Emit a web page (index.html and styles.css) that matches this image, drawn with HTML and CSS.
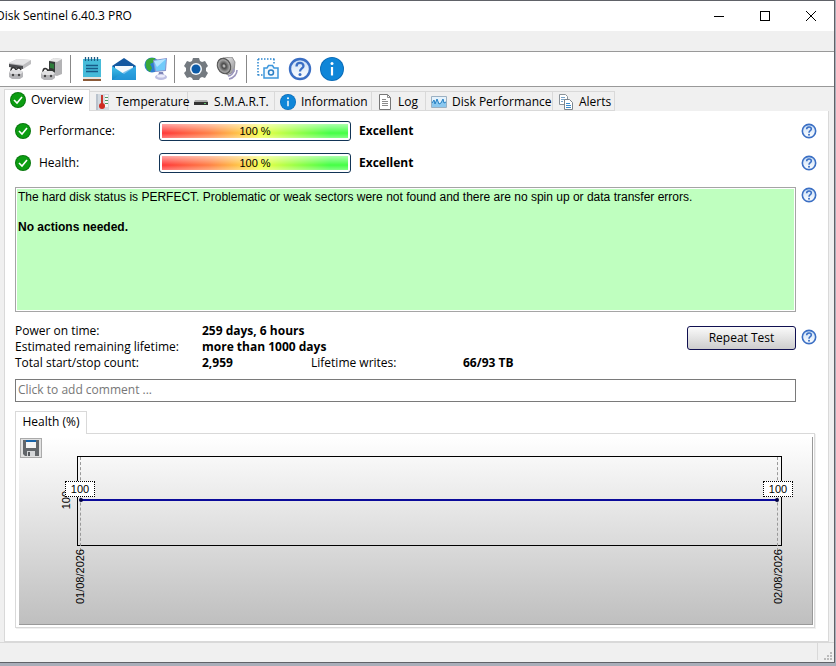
FILE: index.html
```
<!DOCTYPE html>
<html lang="en">
<head>
    <meta charset="utf-8">
    <title>Disk Sentinel</title>
    <link rel="stylesheet" href="styles.css">
</head>
<body>
    <svg class="defs" width="0" height="0">
        <defs>
            <linearGradient id="sky" x1="0" y1="0" x2="0" y2="1"><stop offset="0" stop-color="#45c3ee"/><stop offset="1" stop-color="#1387c6"/></linearGradient>
            <linearGradient id="steel" x1="0" y1="0" x2="1" y2="1"><stop offset="0" stop-color="#f2f2f2"/><stop offset="1" stop-color="#8d8d90"/></linearGradient>
            <linearGradient id="help-bg" x1="0" y1="0" x2="0" y2="1"><stop offset="0" stop-color="#c9dff6"/><stop offset="1" stop-color="#ffffff"/></linearGradient>
            <radialGradient id="cone"><stop offset="0" stop-color="#e5e5e5"/><stop offset="0.3" stop-color="#4a4a4a"/><stop offset="0.8" stop-color="#a5a5a5"/><stop offset="1" stop-color="#666"/></radialGradient>
        </defs>
        <symbol id="check" viewBox="0 0 16 16">
            <circle cx="8" cy="8" r="8" fill="#08780d"/><circle cx="8" cy="8" r="7" fill="#0c9d12"/>
            <path d="M4 8l3 3 5-6" fill="none" stroke="#fff" stroke-width="1.6"/>
        </symbol>
        <symbol id="help" viewBox="0 0 24 24">
            <circle cx="12" cy="12" r="10" fill="url(#help-bg)" stroke="#3b6fc4" stroke-width="2.4"/>
            <path d="M8.5 9.5c0-5 7-4.500 7-.5 0 2.500-3.500 2.500-3.500 5.500" fill="none" stroke="#3b6fc4" stroke-width="2.300"/>
            <circle cx="12" cy="17.500" r="1.500" fill="#3b6fc4"/>
        </symbol>
        <symbol id="info" viewBox="0 0 24 24">
            <circle cx="12" cy="12" r="12" fill="#0b6cb8"/><circle cx="12" cy="12" r="11" fill="#0f86d8"/>
            <circle cx="12" cy="6.500" r="1.500" fill="#fff"/><path d="M12 10v8.500" stroke="#fff" stroke-width="2.200"/>
        </symbol>
    </svg>

    <div class="window">
        <header class="title-bar">
            <span class="title">Disk Sentinel 6.40.3 PRO</span>
            <div class="window-buttons">
                <button type="button" aria-label="Minimize"><svg width="10" height="10"><path d="M0 5.500h10" stroke="#000"/></svg></button>
                <button type="button" aria-label="Maximize"><svg width="10" height="10"><rect x="0.500" y="0.500" width="9" height="9" fill="none" stroke="#000"/></svg></button>
                <button type="button" aria-label="Close"><svg width="10" height="10"><path d="M0 0l10 10M10 0L0 10" stroke="#000"/></svg></button>
            </div>
        </header>
        <div class="menu-bar"></div>

        <div class="toolbar">
            <button type="button" aria-label="Disk test">
                <svg width="24" height="24" viewBox="0 0 24 24">
                    <path d="M1 6l8-4 14 1v4l-8 5-14-2z" fill="#bdbdbf"/><path d="M1 6l8-4 14 1-8 5z" fill="#e5e5e6"/><path d="M1 7l14 2v3L1 10z" fill="#4c4d50"/>
                    <path d="M3 14c0-5 4-4 5-1M8 14c1-4 4-4 5-1" fill="none" stroke="#333" stroke-width="1.500"/>
                    <path d="M1 15l3-2h8l3 2v5l-3 2H4l-3-2z" fill="#b5b5b8"/><path d="M1 15l3-2h8l3 2-2 2H3z" fill="#dedee0"/>
                    <circle cx="5" cy="18" r="1.200" fill="#444"/><circle cx="11" cy="18" r="1.200" fill="#444"/>
                </svg>
            </button>
            <button type="button" aria-label="Surface test">
                <svg width="24" height="24" viewBox="0 0 24 24">
                    <path d="M9 4l5-3 8 1v15l-5 2-8-2z" fill="#b3b3b5"/><path d="M9 4l5-3 8 1-5 3z" fill="#e8e8e8"/><path d="M9 4l6 1v12l-6-1z" fill="#353b38"/><path d="M10 6l4 1v5l-4-1z" fill="#2d7c3a"/>
                    <path d="M3 15c0-5 4-4 5-1M8 15c1-4 4-4 5-1" fill="none" stroke="#333" stroke-width="1.500"/>
                    <path d="M1 16l3-2h8l3 2v5l-3 2H4l-3-2z" fill="#b5b5b8"/><path d="M1 16l3-2h8l3 2-2 2H3z" fill="#e1e1e2"/>
                    <circle cx="5" cy="19" r="1.200" fill="#444"/><circle cx="11" cy="19" r="1.200" fill="#444"/>
                </svg>
            </button>
            <span class="separator"></span>
            <button type="button" aria-label="Report">
                <svg width="24" height="24" viewBox="0 0 24 24">
                    <rect x="3" y="2" width="18" height="20" fill="#46bbd9"/><path d="M3 21h18v3H3z" fill="#8a5a38"/><path d="M3 20h18v2H3z" fill="#e8e4de"/>
                    <path d="M5.500 0v4M8.500 0v4M11.500 0v4M14.500 0v4M17.500 0v4" stroke="#1c5d86" stroke-width="1.300"/>
                    <path d="M6 8.500h12M6 11.500h12M6 14.500h12" stroke="#175a88" stroke-width="1.300"/>
                </svg>
            </button>
            <button type="button" aria-label="Send mail">
                <svg width="24" height="24" viewBox="0 0 24 24">
                    <path d="M0 9l12-8 12 8v4H0z" fill="#1558a0"/><path d="M3 9h18v6l-9 3-9-3z" fill="#f5f9fc"/>
                    <path d="M0 9l12 8 12-8v14H0z" fill="url(#sky)"/><path d="M0 23l12-8 12-6v14z" fill="#2a9be0" opacity=".6"/>
                </svg>
            </button>
            <button type="button" aria-label="Network status">
                <svg width="24" height="24" viewBox="0 0 24 24">
                    <circle cx="8" cy="8" r="7.500" fill="#2d7fd0"/><path d="M2 4c3-4 6-3 9-3l-1 4-4 2 2 4-2 4c-4-2-5-7-4-11z" fill="#3aa83a"/>
                    <path d="M9 3l14-2-1 13-11 1z" fill="#8a93cc"/><path d="M10 4l12-2-1 11-9 1z" fill="#71cbfa"/><path d="M10 4l12-2-9 8z" fill="#b4e6ff"/>
                    <path d="M15 15h4l1 4h-6z" fill="#8187b8"/><ellipse cx="17" cy="20" rx="6" ry="3" fill="#bdbfe2"/><ellipse cx="17" cy="19" rx="4" ry="1.500" fill="#ebebfa"/>
                </svg>
            </button>
            <span class="separator"></span>
            <button type="button" aria-label="Configuration">
                <svg width="24" height="24" viewBox="0 0 24 24">
                    <path d="M9 1h6l1 3 2 1 3-1 3 5-2 2v3l2 2-3 5-3-1-2 1-1 2H9l-1-2-2-1-3 1-3-5 2-2v-3L0 9l3-5 3 1 2-1z" fill="#747a80"/>
                    <circle cx="12" cy="12" r="6" fill="#f4f8fb"/><circle cx="12" cy="12" r="4.500" fill="#0c5ba8"/>
                </svg>
            </button>
            <button type="button" aria-label="Sound">
                <svg width="24" height="24" viewBox="0 0 24 24">
                    <path d="M7 1l9-1 3 5-1 10-7 3z" fill="url(#steel)" stroke="#777" stroke-width=".7"/>
                    <ellipse cx="8" cy="9" rx="6.500" ry="8" transform="rotate(-25 8 9)" fill="url(#cone)" stroke="#555"/>
                    <path d="M12 19c3 0 6-3 6-7M13 22c5-1 8-5 8-9" fill="none" stroke="#9b96bd" stroke-width="1.600"/>
                </svg>
            </button>
            <span class="separator"></span>
            <button type="button" aria-label="Screenshot">
                <svg width="24" height="24" viewBox="0 0 24 24">
                    <path d="M2 2h18M2 2v18M18 2v5M2 18h5" fill="none" stroke="#2c87cf" stroke-width="1.500" stroke-dasharray="1.500 1.500"/>
                    <path d="M8 11h3l1.500-2.500h4L18 11h4v10H8z" fill="#f2f9ff" stroke="#3c96dc" stroke-width="1.500"/>
                    <circle cx="15" cy="15.500" r="2.500" fill="none" stroke="#2c7fc4" stroke-width="1.500"/>
                </svg>
            </button>
            <button type="button" aria-label="Help"><svg width="24" height="24"><use href="#help"/></svg></button>
            <button type="button" aria-label="About"><svg width="24" height="24"><use href="#info"/></svg></button>
        </div>

        <div class="tabs" role="tablist">
            <button type="button" role="tab" aria-selected="true" class="tab active"><svg width="16" height="16"><use href="#check"/></svg>Overview</button>
            <button type="button" role="tab" class="tab">
                <svg width="16" height="16" viewBox="0 0 16 16"><path d="M1 0h13v16H1z" fill="#d3dae1"/><path d="M2 0v16" stroke="#9fabb8"/><path d="M10 1h3v12h-3z" fill="#f6f6f6"/><path d="M6 1h2v9H6z" fill="#c9372c"/><circle cx="7" cy="12" r="3" fill="#cf2b20"/><path d="M10 3.500h3M10 6.500h3M10 9.500h3" stroke="#4c9b62"/></svg>Temperature</button>
            <button type="button" role="tab" class="tab">
                <svg width="16" height="16" viewBox="0 0 16 16"><path d="M2 6h12l1 2H1z" fill="#aaa"/><path d="M1 8h14v3H1z" fill="#333"/><path d="M11 9h2v1h-2z" fill="#62c76c"/></svg>S.M.A.R.T.</button>
            <button type="button" role="tab" class="tab"><svg width="16" height="16"><use href="#info"/></svg>Information</button>
            <button type="button" role="tab" class="tab">
                <svg width="16" height="16" viewBox="0 0 16 16"><path d="M2.500.5h8l3 3v12h-11z" fill="#fff" stroke="#777"/><path d="M10.500.5v3h3M5 5.500h4M5 7.500h6M5 9.500h6M5 11.500h6" fill="none" stroke="#8b8b8b"/></svg>Log</button>
            <button type="button" role="tab" class="tab">
                <svg width="16" height="16" viewBox="0 0 16 16"><path d="M.5 2.500h15v11H.5z" fill="#e4f2fc" stroke="#9bb0c2"/><path d="M1 13V9l2-3 1 4 2-5 2 5 2-1 2-4 1 4 2-1v5z" fill="#8bc8ef"/><path d="M1 9l2-3 1 4 2-5 2 5 2-1 2-4 1 4 2-1" fill="none" stroke="#2480c4"/></svg>Disk Performance</button>
            <button type="button" role="tab" class="tab">
                <svg width="16" height="16" viewBox="0 0 16 16"><path d="M1.500.5h6l2 2v8h-8z" fill="#fff" stroke="#8b9298"/><path d="M3 3.500h4M3 5.500h4M3 7.500h2" stroke="#7aa5ca"/><path d="M6.500 5.500h5l3 3v7h-8z" fill="#fff" stroke="#7c858d"/><path d="M8 9.500h4M8 11.500h5M8 13.500h5" stroke="#3b8bcb"/></svg>Alerts</button>
        </div>

        <main class="panel">
            <div class="line">
                <div class="meter-row">
                    <svg width="16" height="16"><use href="#check"/></svg>
                    <span class="meter-label">Performance:</span>
                    <div class="meter"><div class="meter-fill">100 %</div></div>
                    <b>Excellent</b>
                </div>
                <button type="button" class="help" aria-label="Help"><svg width="16" height="16"><use href="#help"/></svg></button>
            </div>
            <div class="line">
                <div class="meter-row">
                    <svg width="16" height="16"><use href="#check"/></svg>
                    <span class="meter-label">Health:</span>
                    <div class="meter"><div class="meter-fill">100 %</div></div>
                    <b>Excellent</b>
                </div>
                <button type="button" class="help" aria-label="Help"><svg width="16" height="16"><use href="#help"/></svg></button>
            </div>
            <div class="line status-line">
                <div class="status">
                    <p>The hard disk status is PERFECT. Problematic or weak sectors were not found and there are no spin up or data transfer errors.</p>
                    <p><b>No actions needed.</b></p>
                </div>
                <button type="button" class="help" aria-label="Help"><svg width="16" height="16"><use href="#help"/></svg></button>
            </div>
            <div class="line stats-line">
                <div class="stats-row">
                    <dl class="stats">
                        <dt>Power on time:</dt><dd class="wide">259 days, 6 hours</dd>
                        <dt>Estimated remaining lifetime:</dt><dd class="wide">more than 1000 days</dd>
                        <dt>Total start/stop count:</dt><dd>2,959</dd>
                        <dt>Lifetime writes:</dt><dd>66/93 TB</dd>
                    </dl>
                    <button type="button" class="repeat">Repeat Test</button>
                </div>
                <button type="button" class="help" aria-label="Help"><svg width="16" height="16"><use href="#help"/></svg></button>
            </div>
            <input type="text" class="comment" placeholder="Click to add comment ..." aria-label="Comment">

            <button type="button" class="chart-tab">Health (%)</button>
            <section class="chart-frame">
                <div class="chart">
                    <button type="button" class="save" aria-label="Save chart">
                        <svg width="16" height="16" viewBox="0 0 16 16"><path d="M0 0h16v16H2l-2-2z" fill="#62666a"/><path d="M3 0h10v8H3z" fill="#f4f4f4"/><path d="M3 0h10v2H3z" fill="#1763a8"/><path d="M4 11h8v5H4z" fill="#d4d6d8"/><path d="M5 12h2v4H5z" fill="#55585c"/></svg>
                    </button>
                    <div class="plot">
                        <span class="y-label">100</span>
                        <span class="guide start"></span>
                        <span class="guide end"></span>
                        <span class="series"></span>
                        <span class="point start">100</span>
                        <span class="point end">100</span>
                        <span class="date start">01/08/2026</span>
                        <span class="date end">02/08/2026</span>
                    </div>
                </div>
            </section>
        </main>

        <footer class="status-bar">
            <svg width="8" height="8" viewBox="0 0 8 8"><path d="M6 0h2v2H6zM3 3h2v2H3zM6 3h2v2H6zM0 6h2v2H0zM3 6h2v2H3zM6 6h2v2H6z" fill="#bbb"/></svg>
        </footer>
    </div>
</body>
</html>
```
FILE: styles.css
```
* {
    box-sizing: border-box;
}

body {
    margin: 0;
    background: #a9aeb9;
    color: #000;
    font-family: "Open Sans", "Noto Sans", sans-serif;
    font-size: 12px;
    line-height: 16px;
    overflow-x: hidden;
}

button,
input {
    margin: 0;
    padding: 0;
    border: none;
    background: none;
    color: inherit;
    font: inherit;
}

svg {
    display: block;
    flex-shrink: 0;
}

p,
dl,
dd {
    margin: 0;
}

.defs {
    position: absolute;
}

.window {
    display: flex;
    flex-direction: column;
    min-height: calc(100vh - 3px);
    margin-right: 1px;
    border: 1px solid #606268;
    border-left: none;
    background: #f0f0f0;
}

.title-bar {
    display: flex;
    justify-content: space-between;
    align-items: center;
    height: 30px;
    background: #fff;
}

.title {
    margin-left: -4px;
}

.window-buttons {
    display: flex;
}

.window-buttons button {
    display: flex;
    justify-content: center;
    align-items: center;
    width: 46px;
    height: 30px;
}

.menu-bar {
    height: 21px;
    border-bottom: 1px solid #999;
}

.toolbar {
    display: flex;
    align-items: center;
    gap: 8px;
    height: 35px;
    padding-left: 8px;
    background: #fff;
    border-bottom: 1px solid #999;
}

.separator {
    width: 1px;
    height: 28px;
    background: #888;
    margin-left: -2px;
    margin-right: 1px;
}

.tabs {
    display: grid;
    grid-template-columns: 86px 98px 87px 97px 54px 127px 62px;
    align-items: end;
    height: 24px;
    padding-left: 4px;
}

.tab {
    display: flex;
    align-items: center;
    gap: 5px;
    height: 20px;
    padding-left: 5px;
    border: 1px solid #d9d9d9;
    border-left: none;
    border-bottom: none;
    box-shadow: inset 0 -1px 0 #d9d9d9;
    white-space: nowrap;
}

.tab.active {
    height: 22px;
    padding-bottom: 2px;
    background: #fff;
    border-left: 1px solid #d9d9d9;
    box-shadow: none;
}

.panel {
    flex: 1;
    display: flex;
    flex-direction: column;
    align-items: stretch;
    margin: 0 5px 0 4px;
    padding: 4px 11px 13px 10px;
    background: #fff;
    border: 1px solid #d9d9d9;
    border-top: none;
}

.line {
    display: grid;
    grid-template-columns: 1fr 16px;
    gap: 5px;
    align-items: center;
    min-height: 32px;
}

.meter-row {
    display: flex;
    align-items: center;
    gap: 8px;
}

.meter-label {
    width: 112px;
}

.meter {
    width: 192px;
    height: 20px;
    padding: 2px;
    border: 1px solid #123456;
    border-radius: 3px;
    background: #fff;
}

.meter-fill {
    height: 14px;
    background: linear-gradient(rgba(255, 255, 255, 0.6), rgba(255, 255, 255, 0.1) 65%, rgba(255, 255, 255, 0.4)), linear-gradient(to right, #ff2020, #ff7030 25%, #ffc030 42%, #f0ff30 53%, #30ff30 90%);
    font: 11px/14px "Liberation Sans", Arial, sans-serif;
    text-align: center;
}

.status-line,
.stats-line {
    align-items: start;
}

.status-line {
    margin-top: 8px;
}

.status {
    min-height: 125px;
    padding: 2px;
    border: 1px solid #a5a5a5;
    box-shadow: inset 0 0 0 1px #fff;
    background: #bfffbf;
    font: 12px/15px "Liberation Sans", Arial, sans-serif;
}

.status p + p {
    margin-top: 15px;
}

.stats-line {
    margin-top: 11px;
}

.stats-line .help {
    margin-top: 6px;
}

.stats-row {
    display: flex;
    justify-content: space-between;
    align-items: start;
}

.stats {
    display: grid;
    grid-template-columns: 187px 109px 152px auto;
}

.stats dd {
    font-weight: bold;
}

.stats .wide {
    grid-column: 2 / 5;
}

.repeat {
    width: 109px;
    height: 24px;
    margin-top: 3px;
    border: 1px solid #101050;
    border-radius: 3px;
    background: linear-gradient(#fafafa, #cdcdcd);
}

.comment {
    height: 23px;
    margin: 8px 21px 9px 0;
    padding: 0 2px 2px;
    border: 1px solid #7a7a7a;
}

.comment::placeholder {
    color: #777;
    opacity: 1;
}

.chart-tab {
    align-self: flex-start;
    position: relative;
    width: 72px;
    height: 23px;
    padding-bottom: 2px;
    border: 1px solid #d9d9d9;
    border-bottom: none;
    background: #fff;
    margin-bottom: -1px;
}

.chart-frame {
    flex: 1;
    display: flex;
    padding: 3px 1px 2px 3px;
    margin-right: 2px;
    border: 1px solid #d9d9d9;
    box-shadow: 1px 1px 0 #f0f0f0;
}

.chart {
    flex: 1;
    padding: 1px 30px 78px 1px;
    border: 1px solid #999;
    border-top: none;
    border-left: none;
    background: linear-gradient(#fff, #bfbfbf);
}

.save {
    display: flex;
    justify-content: center;
    align-items: center;
    width: 22px;
    height: 20px;
    border: 1px solid #aaa;
    background: #e1e1e1;
}

.plot {
    position: relative;
    height: 90px;
    margin-left: 57px;
    margin-top: -2px;
    border: 1px solid #000;
}

.plot span {
    position: absolute;
    font: 11px/12px "Liberation Sans", Arial, sans-serif;
}

.plot .guide {
    top: 0;
    bottom: -6px;
    border-left: 1px dashed #999;
}

.guide.start,
.series {
    left: 2px;
}

.guide.end,
.series {
    right: 3px;
}

.series {
    top: 42px;
    height: 2px;
    background: #0a0a9a;
}

.series::before,
.series::after {
    content: "";
    position: absolute;
    top: -1px;
    left: -1px;
    width: 4px;
    height: 4px;
    border-radius: 2px;
    background: #000040;
}

.series::after {
    left: auto;
    right: -1px;
}

.plot .point {
    top: 24px;
    width: 30px;
    border: 1px dotted #000;
    background: #fff;
    line-height: 14px;
    text-align: center;
}

.point.start {
    left: -13px;
}

.point.end {
    right: -12px;
}

.y-label,
.date {
    writing-mode: vertical-rl;
    transform: rotate(180deg);
}

.y-label {
    top: 34px;
    left: -18px;
}

.date {
    top: 92px;
}

.date.start {
    left: -4px;
}

.date.end {
    right: -3px;
}

.status-bar {
    display: flex;
    justify-content: flex-end;
    align-items: flex-end;
    height: 20px;
    padding: 0 2px 2px 0;
    border-top: 1px solid #d9d9d9;
}

.status-bar::before {
    content: "";
    align-self: stretch;
    width: 1px;
    margin-right: 6px;
    background: #d9d9d9;
}
```
